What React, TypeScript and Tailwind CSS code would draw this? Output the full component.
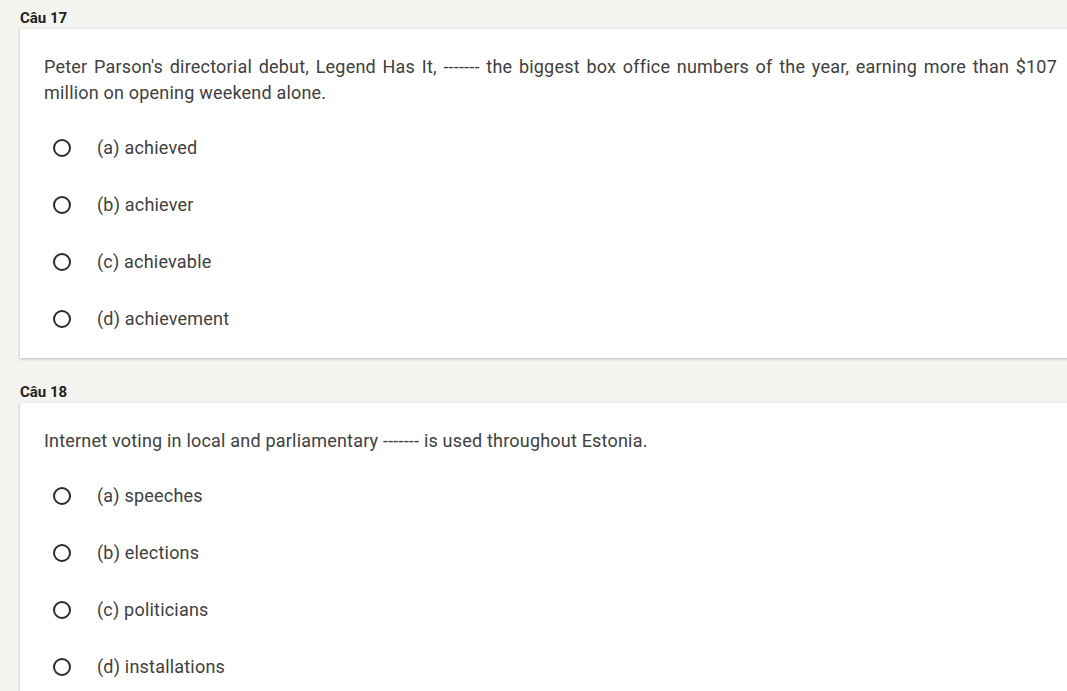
import React from 'react';

type Question = {
  label: string;
  text: string;
  options: string[];
};

const questions: Question[] = [
  {
    label: 'Câu 17',
    text: "Peter Parson's directorial debut, Legend Has It, ------- the biggest box office numbers of the year, earning more than $107 million on opening weekend alone.",
    options: ['(a) achieved', '(b) achiever', '(c) achievable', '(d) achievement'],
  },
  {
    label: 'Câu 18',
    text: 'Internet voting in local and parliamentary ------- is used throughout Estonia.',
    options: ['(a) speeches', '(b) elections', '(c) politicians', '(d) installations'],
  },
];

function Radio() {
  return <span className="block w-[18px] h-[18px] rounded-full border-2 border-[#2b2b2b] shrink-0" />;
}

export default function App() {
  return (
    <div
      className="w-[1067px] h-[691px] overflow-hidden bg-[#f4f4f1] pt-[8px]"
      style={{ fontFamily: 'Roboto, "Liberation Sans", sans-serif' }}
    >
      {questions.map((q) => (
        <div key={q.label} className="mb-[24px]">
          <div className="pl-[20px] h-[21px] text-[15px] leading-[21px] font-bold text-[#222]">{q.label}</div>
          <div className="ml-[20px] w-[1061px] bg-white shadow-[0_1px_3px_rgba(0,0,0,0.25)] pt-[25px] pb-[11px]">
            <p className="px-[24px] text-[18px] leading-[26px] tracking-[0.2px] text-[#404040] text-justify mb-[13px]">
              {q.text}
            </p>
            {q.options.map((o) => (
              <div key={o} className="flex items-center h-[57px] pl-[33px]">
                <Radio />
                <span className="ml-[26px] text-[18px] tracking-[0.2px] text-[#404040]">{o}</span>
              </div>
            ))}
          </div>
        </div>
      ))}
    </div>
  );
}
